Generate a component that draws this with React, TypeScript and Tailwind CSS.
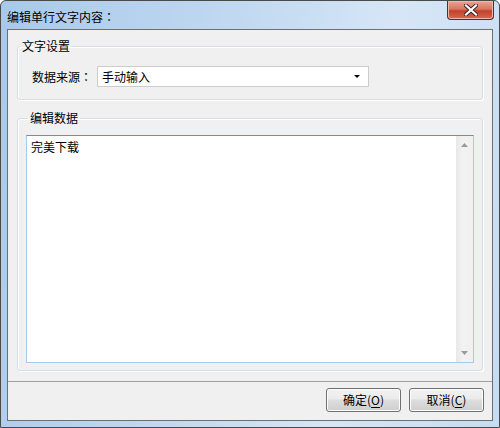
import React from "react";

const font = { fontFamily: '"Noto Sans CJK SC", "Noto Sans", sans-serif' };
// centred full-width colon, as in the reference
const colon = { fontFamily: '"Noto Sans CJK TC", "Noto Sans CJK SC", sans-serif' };

function GroupBox({
  title,
  className,
  children,
}: {
  title: string;
  className?: string;
  children: React.ReactNode;
}) {
  return (
    <fieldset
      className={
        "mx-[9px] rounded-[3px] border border-[#d5dfe5] shadow-[inset_1px_1px_0_#ffffff,1px_1px_0_#ffffff] " +
        (className ?? "")
      }
    >
      <legend className="ml-[2px] px-[2px] text-[12px] leading-[16px] text-black">
        {title}
      </legend>
      {children}
    </fieldset>
  );
}

function Button({ label, hotkey }: { label: string; hotkey: string }) {
  return (
    <button className="flex h-[24px] w-[75px] items-center justify-center rounded-[3px] border border-[#707070] bg-[linear-gradient(#f2f2f2_0%,#ebebeb_45%,#dddddd_50%,#cfcfcf_100%)] text-[12px] leading-[16px] text-black shadow-[inset_0_0_0_1px_#fcfcfc]">
      {label}(<span className="underline underline-offset-2">{hotkey}</span>)
    </button>
  );
}

export default function App() {
  return (
    <div
      style={font}
      className="flex h-[428px] w-[500px] flex-col rounded-t-[6px] border border-[#4a4a4a] bg-[linear-gradient(100deg,#a9c9ea_0%,#c3daf1_45%,#d6e6f6_70%,#c6dcf2_100%)]"
    >
      {/* title bar */}
      <div className="flex h-[28px] shrink-0 items-start justify-between">
        <div className="ml-[6px] mt-[8px] whitespace-nowrap text-[12px] leading-[16px] text-black">
          编辑单行文字内容<span style={colon}>：</span>
        </div>
        <div className="mr-[5px] flex h-[19px] w-[47px] items-center justify-center rounded-b-[4px] border border-t-0 border-[#5b2a22] bg-[linear-gradient(#e8a597_0%,#d9765f_45%,#c2402a_55%,#d46a4f_100%)] shadow-[inset_0_0_0_1px_#f0b8aa]">
          <svg width="14" height="12" viewBox="0 0 14 12">
            <path
              d="M2 1.5 L12 10.5 M12 1.5 L2 10.5"
              stroke="#3a2320"
              strokeWidth="4"
              strokeLinecap="square"
            />
            <path
              d="M2 1.5 L12 10.5 M12 1.5 L2 10.5"
              stroke="#ffffff"
              strokeWidth="2.2"
              strokeLinecap="square"
            />
          </svg>
        </div>
      </div>

      {/* client area */}
      <div className="mx-[6px] mb-[6px] flex flex-1 flex-col border border-[#6f6f6f] bg-[#f0f0f0]">
        <GroupBox title="文字设置" className="mt-[8px] pb-[12px] pt-[12px]">
          <div className="flex items-center pl-[14px]">
            <span className="w-[60px] shrink-0 whitespace-nowrap text-[12px] leading-[16px] text-black">
              数据来源<span style={colon}>：</span>
            </span>
            <div className="ml-[5px] flex h-[21px] w-[272px] items-center justify-between border border-[#cccccc] bg-white pl-[4px] pr-[8px]">
              <span className="text-[12px] leading-[16px] text-black">手动输入</span>
              <svg width="6" height="3" viewBox="0 0 6 3">
                <path d="M0 0 H6 L3 3 Z" fill="#000000" />
              </svg>
            </div>
          </div>
        </GroupBox>

        <GroupBox title="编辑数据" className="mt-[10px] flex flex-1 flex-col px-[8px] pb-[7px] pt-[9px]">
          <div className="flex flex-1 border border-[#a9c9e8] border-t-[#5f93c7] bg-white">
            <div className="flex-1 pl-[4px] pt-[3px] text-[12px] leading-[16px] text-black">
              完美下载
            </div>
            <div className="flex w-[17px] flex-col items-center justify-between bg-[linear-gradient(90deg,#e8e8e8,#f2f2f2_40%,#f0f0f0)] py-[7px]">
              <svg width="7" height="4" viewBox="0 0 7 4">
                <path d="M3.5 0 L7 4 H0 Z" fill="#9a9a9a" />
              </svg>
              <svg width="7" height="4" viewBox="0 0 7 4">
                <path d="M0 0 H7 L3.5 4 Z" fill="#9a9a9a" />
              </svg>
            </div>
          </div>
        </GroupBox>

        {/* separator + buttons */}
        <div className="mt-[10px] border-t border-[#a0a0a0] shadow-[inset_0_1px_0_#ffffff]" />
        <div className="flex justify-end gap-[8px] pb-[8px] pr-[8px] pt-[6px]">
          <Button label="确定" hotkey="O" />
          <Button label="取消" hotkey="C" />
        </div>
      </div>
    </div>
  );
}
